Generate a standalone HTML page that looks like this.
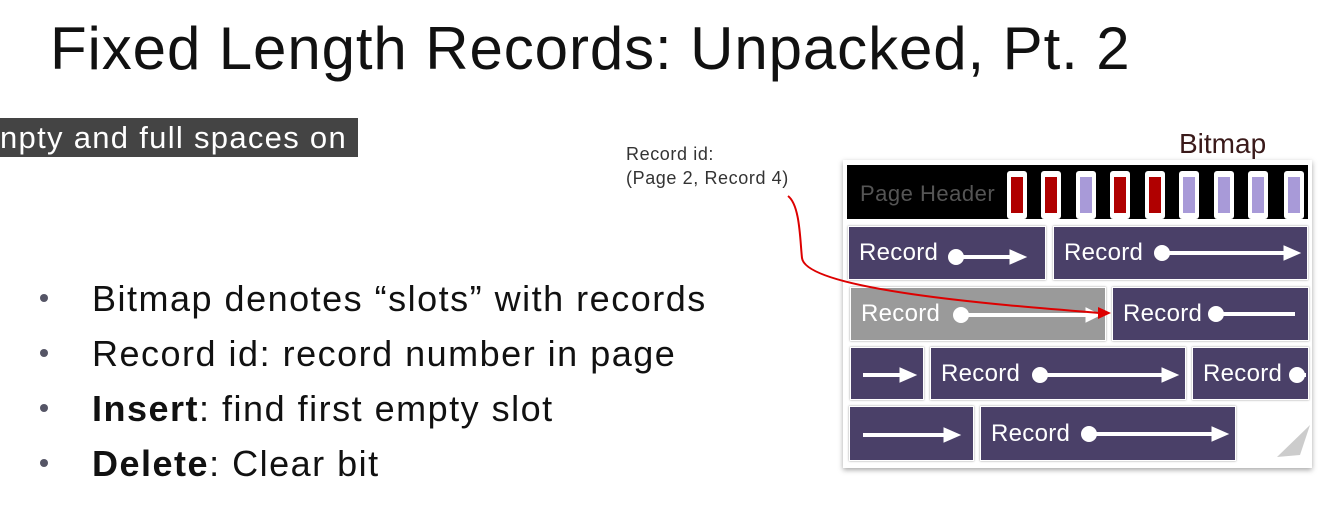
<!DOCTYPE html>
<html><head><style>
*{margin:0;padding:0;box-sizing:border-box}
body{width:1329px;height:531px;background:#fff;position:relative;overflow:hidden;font-family:"Liberation Sans",sans-serif}
.a{position:absolute}
.title{left:50px;top:14px;font-size:60px;letter-spacing:0.9px;color:#111;white-space:nowrap}
.cap{left:0;top:118px;width:358px;height:39px;background:#444;color:#fff;font-size:31px;letter-spacing:1.3px;line-height:39px;white-space:nowrap;overflow:hidden}
.bul{left:40px;font-size:36px;letter-spacing:1.5px;color:#111;white-space:nowrap}
.bul span.d{display:inline-block;width:8px;height:8px;border-radius:50%;background:#556;margin-right:44px;vertical-align:middle;position:relative;top:-3px}
.r{background:#4a4068;border:1px solid #fff;box-shadow:0 0 2px #999;color:#fff;font-size:24px;letter-spacing:0.3px}
.r .t{position:absolute;left:10px;top:50%;transform:translateY(-50%)}
.bit{width:20px;height:48px;background:#fff;border-radius:3px;top:171px}
.bit i{position:absolute;left:4px;top:6px;width:12px;height:36px}
</style></head><body>
<div class="a title">Fixed Length Records: Unpacked, Pt. 2</div>
<div class="a cap">npty and full spaces on</div>
<div class="a bul" style="top:278px"><span class="d"></span>Bitmap denotes “slots” with records</div>
<div class="a bul" style="top:333px"><span class="d"></span>Record id: record number in page</div>
<div class="a bul" style="top:388px"><span class="d"></span><b>Insert</b>: find first empty slot</div>
<div class="a bul" style="top:443px"><span class="d"></span><b>Delete</b>: Clear bit</div>

<div class="a" style="left:626px;top:142px;font-size:18px;letter-spacing:0.6px;color:#333;line-height:24px">Record id:<br>(Page 2, Record 4)</div>
<div class="a" style="left:1179px;top:128px;font-size:28px;color:#3a1a1a">Bitmap</div>

<div class="a" style="left:843px;top:160px;width:469px;height:308px;background:#fff;box-shadow:0 2px 5px rgba(0,0,0,.35)"></div>
<div class="a" style="left:847px;top:165px;width:461px;height:54px;background:#000"></div>
<div class="a" style="left:860px;top:181px;font-size:22px;letter-spacing:0.5px;color:#555">Page Header</div>
<div class="a bit" style="left:1007px"><i style="background:#b00000"></i></div>
<div class="a bit" style="left:1041px"><i style="background:#b00000"></i></div>
<div class="a bit" style="left:1076px"><i style="background:#a89ad8"></i></div>
<div class="a bit" style="left:1110px"><i style="background:#b00000"></i></div>
<div class="a bit" style="left:1145px"><i style="background:#b00000"></i></div>
<div class="a bit" style="left:1179px"><i style="background:#a89ad8"></i></div>
<div class="a bit" style="left:1214px"><i style="background:#a89ad8"></i></div>
<div class="a bit" style="left:1248px"><i style="background:#a89ad8"></i></div>
<div class="a bit" style="left:1284px"><i style="background:#a89ad8"></i></div>

<div class="a r" style="left:848px;top:226px;width:198px;height:54px"><span class="t">Record</span></div>
<div class="a r" style="left:1053px;top:226px;width:255px;height:54px"><span class="t">Record</span></div>
<div class="a r" style="left:850px;top:287px;width:256px;height:54px;background:#9a9a9a"><span class="t">Record</span></div>
<div class="a r" style="left:1112px;top:287px;width:197px;height:54px"><span class="t">Record</span></div>
<div class="a r" style="left:850px;top:347px;width:74px;height:53px"></div>
<div class="a r" style="left:930px;top:347px;width:256px;height:53px"><span class="t">Record</span></div>
<div class="a r" style="left:1192px;top:347px;width:117px;height:53px"><span class="t">Record</span></div>
<div class="a r" style="left:849px;top:406px;width:125px;height:55px"></div>
<div class="a r" style="left:980px;top:406px;width:256px;height:55px"><span class="t">Record</span></div>

<svg class="a" style="left:0;top:0" width="1329" height="531">
<g fill="#fff" stroke="#fff" stroke-width="4">
<circle cx="956" cy="257" r="6"/><line x1="956" y1="257" x2="1012" y2="257"/><polygon points="1010,250 1026,257 1010,264" stroke-width="1"/>
<circle cx="1162" cy="253" r="6"/><line x1="1162" y1="253" x2="1286" y2="253"/><polygon points="1284,246 1300,253 1284,260" stroke-width="1"/>
<circle cx="961" cy="315" r="6"/><line x1="961" y1="315" x2="1088" y2="315"/><polygon points="1086,308 1100,315 1086,322" stroke-width="1"/>
<circle cx="1216" cy="314" r="6"/><line x1="1216" y1="314" x2="1295" y2="314"/>
<line x1="863" y1="375" x2="902" y2="375"/><polygon points="900,368 916,375 900,382" stroke-width="1"/>
<circle cx="1040" cy="375" r="6"/><line x1="1040" y1="375" x2="1164" y2="375"/><polygon points="1162,368 1178,375 1162,382" stroke-width="1"/>
<circle cx="1297" cy="375" r="6"/><line x1="1297" y1="375" x2="1306" y2="375"/>
<line x1="863" y1="435" x2="946" y2="435"/><polygon points="944,428 960,435 944,442" stroke-width="1"/>
<circle cx="1089" cy="434" r="6"/><line x1="1089" y1="434" x2="1214" y2="434"/><polygon points="1212,427 1228,434 1212,441" stroke-width="1"/>
</g>
<polygon points="1277,457 1310,425 1300,455" fill="#ccc"/>
<path d="M788,196 C800,205 800,240 802,258 C806,290 1000,305 1100,313" fill="none" stroke="#d00" stroke-width="2"/>
<polygon points="1098,307 1111,313 1098,319" fill="#d00"/>
</svg>
</body></html>
